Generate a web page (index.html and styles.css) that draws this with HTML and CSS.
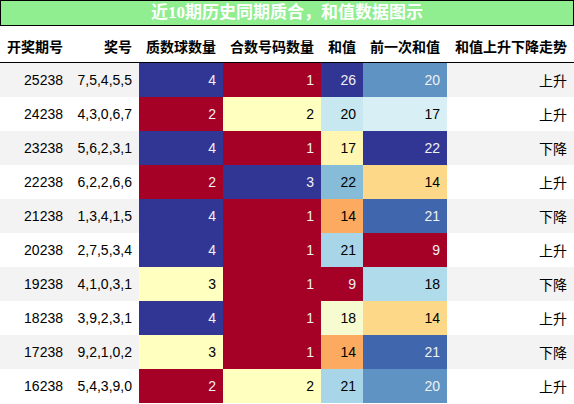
FILE: index.html
```html
<!DOCTYPE html>
<html lang="zh">
<head>
  <meta charset="UTF-8" />
  <title>近10期历史同期质合，和值数据图示</title>
  <link rel="stylesheet" href="styles.css">
</head>
<body>
  <div class="title">近10期历史同期质合，和值数据图示</div>

  <table class="stats">
    <colgroup>
      <col class="c-issue">
      <col class="c-nums">
      <col class="c-prime">
      <col class="c-comp">
      <col class="c-sum">
      <col class="c-prev">
      <col class="c-trend">
    </colgroup>
    <thead>
      <tr>
        <th>开奖期号</th>
        <th>奖号</th>
        <th>质数球数量</th>
        <th>合数号码数量</th>
        <th>和值</th>
        <th>前一次和值</th>
        <th>和值上升下降走势</th>
      </tr>
    </thead>
    <tbody>
      <tr>
        <td>25238</td><td>7,5,4,5,5</td>
        <td class="dark" style="background:#313695">4</td>
        <td class="dark" style="background:#a50026">1</td>
        <td class="dark" style="background:#313695">26</td>
        <td class="dark" style="background:#5e93c4">20</td>
        <td>上升</td>
      </tr>
      <tr>
        <td>24238</td><td>4,3,0,6,7</td>
        <td class="dark" style="background:#a50026">2</td>
        <td style="background:#ffffbf">2</td>
        <td style="background:#c7e7f1">20</td>
        <td style="background:#d8eff6">17</td>
        <td>上升</td>
      </tr>
      <tr>
        <td>23238</td><td>5,6,2,3,1</td>
        <td class="dark" style="background:#313695">4</td>
        <td class="dark" style="background:#a50026">1</td>
        <td style="background:#fff6b1">17</td>
        <td class="dark" style="background:#313695">22</td>
        <td>下降</td>
      </tr>
      <tr>
        <td>22238</td><td>6,2,2,6,6</td>
        <td class="dark" style="background:#a50026">2</td>
        <td class="dark" style="background:#313695">3</td>
        <td style="background:#87bcd9">22</td>
        <td style="background:#fed889">14</td>
        <td>上升</td>
      </tr>
      <tr>
        <td>21238</td><td>1,3,4,1,5</td>
        <td class="dark" style="background:#313695">4</td>
        <td class="dark" style="background:#a50026">1</td>
        <td style="background:#fcaa5f">14</td>
        <td class="dark" style="background:#4066ad">21</td>
        <td>下降</td>
      </tr>
      <tr>
        <td>20238</td><td>2,7,5,3,4</td>
        <td class="dark" style="background:#313695">4</td>
        <td class="dark" style="background:#a50026">1</td>
        <td style="background:#a8d6e8">21</td>
        <td class="dark" style="background:#a50026">9</td>
        <td>上升</td>
      </tr>
      <tr>
        <td>19238</td><td>4,1,0,3,1</td>
        <td style="background:#ffffbf">3</td>
        <td class="dark" style="background:#a50026">1</td>
        <td class="dark" style="background:#a50026">9</td>
        <td style="background:#afdbea">18</td>
        <td>下降</td>
      </tr>
      <tr>
        <td>18238</td><td>3,9,2,3,1</td>
        <td class="dark" style="background:#313695">4</td>
        <td class="dark" style="background:#a50026">1</td>
        <td style="background:#f6fbd0">18</td>
        <td style="background:#fed889">14</td>
        <td>上升</td>
      </tr>
      <tr>
        <td>17238</td><td>9,2,1,0,2</td>
        <td style="background:#ffffbf">3</td>
        <td class="dark" style="background:#a50026">1</td>
        <td style="background:#fcaa5f">14</td>
        <td class="dark" style="background:#4066ad">21</td>
        <td>下降</td>
      </tr>
      <tr>
        <td>16238</td><td>5,4,3,9,0</td>
        <td class="dark" style="background:#a50026">2</td>
        <td style="background:#ffffbf">2</td>
        <td style="background:#a8d6e8">21</td>
        <td class="dark" style="background:#5e93c4">20</td>
        <td>上升</td>
      </tr>
    </tbody>
  </table>
</body>
</html>
```

FILE: styles.css
```css
body {
  margin: 0;
  font-family: 'Liberation Sans', 'Noto Sans CJK SC', sans-serif;
  color: #000;
  background: #fff;
}

.title {
  box-sizing: border-box;
  width: 574px;
  height: 26px;
  border: 1px solid #000;
  background: #90ee90;
  color: #fff;
  font: bold 17px/24px 'Liberation Serif', 'Noto Sans CJK SC', serif;
  text-align: center;
}

.stats {
  width: 574px;
  border-collapse: collapse;
  table-layout: fixed;
  font-size: 14px;
}

.c-issue { width: 70px; }
.c-nums  { width: 69px; }
.c-prime { width: 84px; }
.c-comp  { width: 98px; }
.c-sum   { width: 42px; }
.c-prev  { width: 84px; }
.c-trend { width: 127px; }

.stats th,
.stats td {
  padding: 0 7px 0 0;
  text-align: right;
  white-space: nowrap;
}

.stats th {
  height: 32px;
  padding-top: 4px;
  font-weight: bold;
  border-bottom: 1px solid #000;
}

.stats td {
  height: 34px;
}

.stats tbody tr:nth-child(odd) {
  background: #f3f3f3;
}

.stats td.dark {
  color: #f1f1f1;
}
```
